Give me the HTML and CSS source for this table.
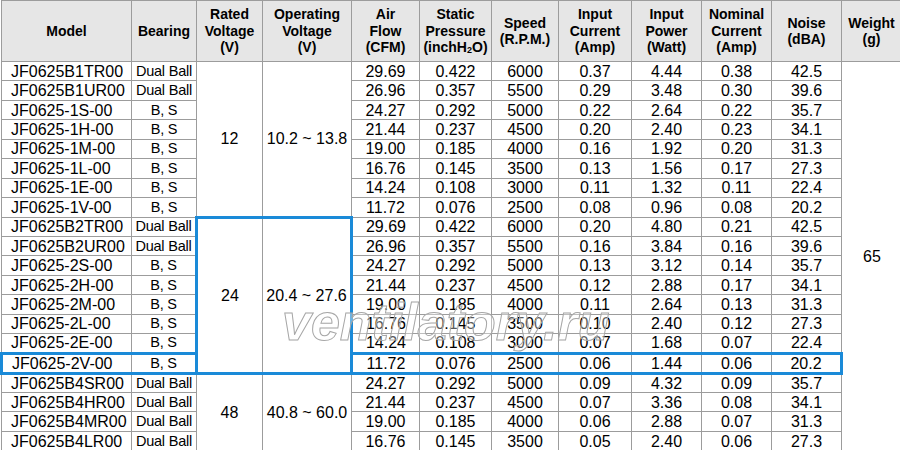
FILE: index.html
```html
<!DOCTYPE html>
<html lang="en">
<head>
<meta charset="utf-8">
<title>JF0625 Fan Specifications</title>
<link rel="stylesheet" href="styles.css">
</head>
<body>
<div class="sheet">
<table class="spec">
<colgroup>
<col class="c-model"><col class="c-bearing"><col class="c-rated"><col class="c-op"><col class="c-air"><col class="c-static"><col class="c-speed"><col class="c-icur"><col class="c-ipow"><col class="c-ncur"><col class="c-noise"><col class="c-weight">
</colgroup>
<thead>
<tr class="head">
<th>Model</th><th>Bearing</th><th>Rated<br>Voltage<br>(V)</th><th>Operating<br>Voltage<br>(V)</th><th>Air<br>Flow<br>(CFM)</th><th>Static<br>Pressure<br>(inchH<sub>2</sub>O)</th><th>Speed<br>(R.P.M.)</th><th>Input<br>Current<br>(Amp)</th><th>Input<br>Power<br>(Watt)</th><th>Nominal<br>Current<br>(Amp)</th><th>Noise<br>(dBA)</th><th>Weight<br>(g)</th>
</tr>
</thead>
<tbody>
<tr><td class="model">JF0625B1TR00</td><td class="bear">Dual Ball</td><td rowspan="8">12</td><td rowspan="8">10.2 ~ 13.8</td><td>29.69</td><td>0.422</td><td>6000</td><td>0.37</td><td>4.44</td><td>0.38</td><td>42.5</td><td rowspan="20" class="weight">65</td></tr>
<tr><td class="model">JF0625B1UR00</td><td class="bear">Dual Ball</td><td>26.96</td><td>0.357</td><td>5500</td><td>0.29</td><td>3.48</td><td>0.30</td><td>39.6</td></tr>
<tr><td class="model">JF0625-1S-00</td><td class="bear">B, S</td><td>24.27</td><td>0.292</td><td>5000</td><td>0.22</td><td>2.64</td><td>0.22</td><td>35.7</td></tr>
<tr><td class="model">JF0625-1H-00</td><td class="bear">B, S</td><td>21.44</td><td>0.237</td><td>4500</td><td>0.20</td><td>2.40</td><td>0.23</td><td>34.1</td></tr>
<tr><td class="model">JF0625-1M-00</td><td class="bear">B, S</td><td>19.00</td><td>0.185</td><td>4000</td><td>0.16</td><td>1.92</td><td>0.20</td><td>31.3</td></tr>
<tr><td class="model">JF0625-1L-00</td><td class="bear">B, S</td><td>16.76</td><td>0.145</td><td>3500</td><td>0.13</td><td>1.56</td><td>0.17</td><td>27.3</td></tr>
<tr><td class="model">JF0625-1E-00</td><td class="bear">B, S</td><td>14.24</td><td>0.108</td><td>3000</td><td>0.11</td><td>1.32</td><td>0.11</td><td>22.4</td></tr>
<tr><td class="model">JF0625-1V-00</td><td class="bear">B, S</td><td>11.72</td><td>0.076</td><td>2500</td><td>0.08</td><td>0.96</td><td>0.08</td><td>20.2</td></tr>
<tr><td class="model">JF0625B2TR00</td><td class="bear">Dual Ball</td><td rowspan="8" class="hl-t hl-l hl-b">24</td><td rowspan="8" class="hl-t hl-r hl-b">20.4 ~ 27.6</td><td>29.69</td><td>0.422</td><td>6000</td><td>0.20</td><td>4.80</td><td>0.21</td><td>42.5</td></tr>
<tr><td class="model">JF0625B2UR00</td><td class="bear">Dual Ball</td><td>26.96</td><td>0.357</td><td>5500</td><td>0.16</td><td>3.84</td><td>0.16</td><td>39.6</td></tr>
<tr><td class="model">JF0625-2S-00</td><td class="bear">B, S</td><td>24.27</td><td>0.292</td><td>5000</td><td>0.13</td><td>3.12</td><td>0.14</td><td>35.7</td></tr>
<tr><td class="model">JF0625-2H-00</td><td class="bear">B, S</td><td>21.44</td><td>0.237</td><td>4500</td><td>0.12</td><td>2.88</td><td>0.17</td><td>34.1</td></tr>
<tr><td class="model">JF0625-2M-00</td><td class="bear">B, S</td><td>19.00</td><td>0.185</td><td>4000</td><td>0.11</td><td>2.64</td><td>0.13</td><td>31.3</td></tr>
<tr><td class="model">JF0625-2L-00</td><td class="bear">B, S</td><td>16.76</td><td>0.145</td><td>3500</td><td>0.10</td><td>2.40</td><td>0.12</td><td>27.3</td></tr>
<tr><td class="model">JF0625-2E-00</td><td class="bear">B, S</td><td>14.24</td><td>0.108</td><td>3000</td><td>0.07</td><td>1.68</td><td>0.07</td><td>22.4</td></tr>
<tr class="hl-row"><td class="model hl-l hl-t hl-b">JF0625-2V-00</td><td class="bear hl-t hl-b">B, S</td><td class="hl-t hl-b">11.72</td><td class="hl-t hl-b">0.076</td><td class="hl-t hl-b">2500</td><td class="hl-t hl-b">0.06</td><td class="hl-t hl-b">1.44</td><td class="hl-t hl-b">0.06</td><td class="hl-t hl-b hl-r">20.2</td></tr>
<tr><td class="model">JF0625B4SR00</td><td class="bear">Dual Ball</td><td rowspan="4">48</td><td rowspan="4">40.8 ~ 60.0</td><td>24.27</td><td>0.292</td><td>5000</td><td>0.09</td><td>4.32</td><td>0.09</td><td>35.7</td></tr>
<tr><td class="model">JF0625B4HR00</td><td class="bear">Dual Ball</td><td>21.44</td><td>0.237</td><td>4500</td><td>0.07</td><td>3.36</td><td>0.08</td><td>34.1</td></tr>
<tr><td class="model">JF0625B4MR00</td><td class="bear">Dual Ball</td><td>19.00</td><td>0.185</td><td>4000</td><td>0.06</td><td>2.88</td><td>0.07</td><td>31.3</td></tr>
<tr><td class="model">JF0625B4LR00</td><td class="bear">Dual Ball</td><td>16.76</td><td>0.145</td><td>3500</td><td>0.05</td><td>2.40</td><td>0.06</td><td>27.3</td></tr>
</tbody>
</table>
<div class="watermark">ventilatory.ru</div>
</div>
</body>
</html>
```
FILE: styles.css
```css
html, body {
  margin: 0;
  padding: 0;
  background: #ffffff;
}
.sheet {
  position: relative;
  width: 900px;
  height: 450px;
  overflow: hidden;
}
.spec {
  width: 900px;
  table-layout: fixed;
  border-collapse: collapse;
  font-family: "Liberation Sans", Arial, sans-serif;
  color: #000;
}
.c-model { width: 130px; }
.c-bearing { width: 65px; }
.c-rated { width: 66px; }
.c-op { width: 89px; }
.c-air { width: 68px; }
.c-static { width: 72px; }
.c-speed { width: 67px; }
.c-icur { width: 73px; }
.c-ipow { width: 70px; }
.c-ncur { width: 70px; }
.c-noise { width: 70px; }
.c-weight { width: 60px; }

.spec th, .spec td {
  border: 1px solid #9c9c9c;
  padding: 0;
  text-align: center;
  vertical-align: middle;
  white-space: nowrap;
  overflow: hidden;
}
.head th {
  height: 60px;
  background: #e6e6e6;
  font-size: 14px;
  font-weight: bold;
  line-height: 16.5px;
}
.head th sub {
  font-size: 9px;
  line-height: 0;
  vertical-align: -1px;
}
.spec tbody tr {
  height: 19.45px;
}
.spec td {
  font-size: 16px;
  line-height: 17px;
}
.spec td.model {
  text-align: left;
  padding-left: 9px;
}
.spec td.bear {
  font-size: 14.5px;
  letter-spacing: -0.2px;
}
.spec td.hl-t { border-top: 3px solid #1a8ad8; }
.spec td.hl-b { border-bottom: 3px solid #1a8ad8; }
.spec td.hl-l { border-left: 3px solid #1a8ad8; }
.spec td.hl-r { border-right: 3px solid #1a8ad8; }

.watermark {
  position: absolute;
  left: 282px;
  top: 292px;
  font-family: "Liberation Sans", Arial, sans-serif;
  font-style: italic;
  font-weight: bold;
  font-size: 52px;
  letter-spacing: 0;
  line-height: 60px;
  color: rgba(255, 255, 255, 0.35);
  -webkit-text-stroke: 1px #a6a6a6;
  pointer-events: none;
  white-space: nowrap;
}
```
